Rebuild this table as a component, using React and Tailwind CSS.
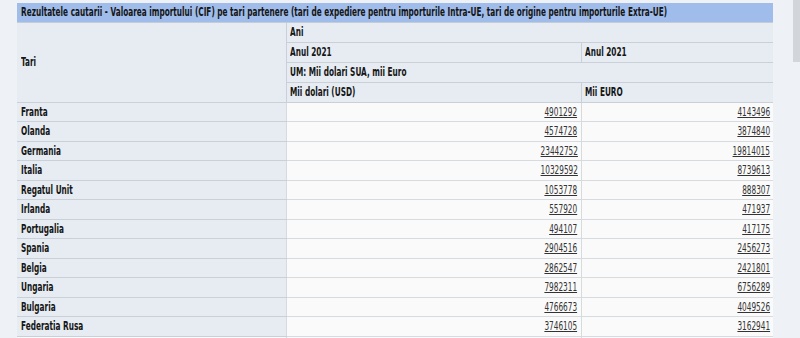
const rows = [
  ['Franta', '4901292', '4143496'],
  ['Olanda', '4574728', '3874840'],
  ['Germania', '23442752', '19814015'],
  ['Italia', '10329592', '8739613'],
  ['Regatul Unit', '1053778', '888307'],
  ['Irlanda', '557920', '471937'],
  ['Portugalia', '494107', '417175'],
  ['Spania', '2904516', '2456273'],
  ['Belgia', '2862547', '2421801'],
  ['Ungaria', '7982311', '6756289'],
  ['Bulgaria', '4766673', '4049526'],
  ['Federatia Rusa', '3746105', '3162941'],
]

const font = { fontFamily: '"DejaVu Sans Condensed", "DejaVu Sans", sans-serif' }

// the source page renders a very narrow font, so squeeze the text horizontally
function Narrow({ children, right }) {
  return (
    <span className={`inline-block whitespace-nowrap scale-x-[0.68] ${right ? 'origin-right' : 'origin-left'}`}>
      {children}
    </span>
  )
}

export default function App() {
  return (
    <div className="relative h-[338px] w-[800px] overflow-hidden bg-[#eef2f7] pt-[3px] pl-[17px]" style={font}>
      <table className="w-[756px] table-fixed border-collapse text-[12px] leading-[14px] text-[#151515]">
        <colgroup>
          <col className="w-[269px]" />
          <col className="w-[295px]" />
          <col className="w-[192px]" />
        </colgroup>
        <thead>
          <tr className="h-[19px] bg-[#a0bcea]">
            <th colSpan={3} className="overflow-hidden border-b border-[#c3ccd8] px-[4px] text-left font-bold">
              <Narrow>
                Rezultatele cautarii - Valoarea importului (CIF) pe tari partenere (tari de expediere pentru importurile Intra-UE, tari de origine pentru importurile Extra-UE)
              </Narrow>
            </th>
          </tr>
          <tr className="h-[20px] bg-[#e6ecf2]">
            <th rowSpan={4} className="border-b border-[#c9d0d8] px-[4px] text-left font-bold"><Narrow>Tari</Narrow></th>
            <th colSpan={2} className="border-b border-l border-[#c9d0d8] px-[3px] text-left font-bold"><Narrow>Ani</Narrow></th>
          </tr>
          <tr className="h-[20px] bg-[#e6ecf2]">
            <th className="border-b border-l border-[#c9d0d8] px-[3px] text-left font-bold"><Narrow>Anul 2021</Narrow></th>
            <th className="border-b border-l border-[#c9d0d8] px-[3px] text-left font-bold"><Narrow>Anul 2021</Narrow></th>
          </tr>
          <tr className="h-[20px] bg-[#e6ecf2]">
            <th colSpan={2} className="border-b border-l border-[#c9d0d8] px-[3px] text-left font-bold"><Narrow>UM: Mii dolari SUA, mii Euro</Narrow></th>
          </tr>
          <tr className="h-[20px] bg-[#e6ecf2]">
            <th className="border-b border-l border-[#c9d0d8] px-[3px] text-left font-bold"><Narrow>Mii dolari (USD)</Narrow></th>
            <th className="border-b border-l border-[#c9d0d8] px-[3px] text-left font-bold"><Narrow>Mii EURO</Narrow></th>
          </tr>
        </thead>
        <tbody>
          {rows.map(([name, usd, eur]) => (
            <tr key={name} className="h-[19.5px]">
              <td className="border-b border-[#c9d0d8] bg-[#e6ecf2] px-[4px] font-bold"><Narrow>{name}</Narrow></td>
              <td className="border-b border-l border-[#d6dbe0] bg-[#fafafa] px-[3px] text-right text-[#333]">
                <Narrow right><span className="underline">{usd}</span></Narrow>
              </td>
              <td className="border-b border-l border-[#d6dbe0] bg-[#fafafa] px-[3px] text-right text-[#333]">
                <Narrow right><span className="underline">{eur}</span></Narrow>
              </td>
            </tr>
          ))}
          <tr className="h-[19.5px]">
            <td className="bg-[#fafafa]"></td>
            <td className="border-l border-[#d6dbe0] bg-[#fafafa]"></td>
            <td className="border-l border-[#d6dbe0] bg-[#fafafa]"></td>
          </tr>
        </tbody>
      </table>
      <div className="absolute top-0 right-0 h-[62px] w-[7px] bg-[#d2d6db]"></div>
    </div>
  )
}
